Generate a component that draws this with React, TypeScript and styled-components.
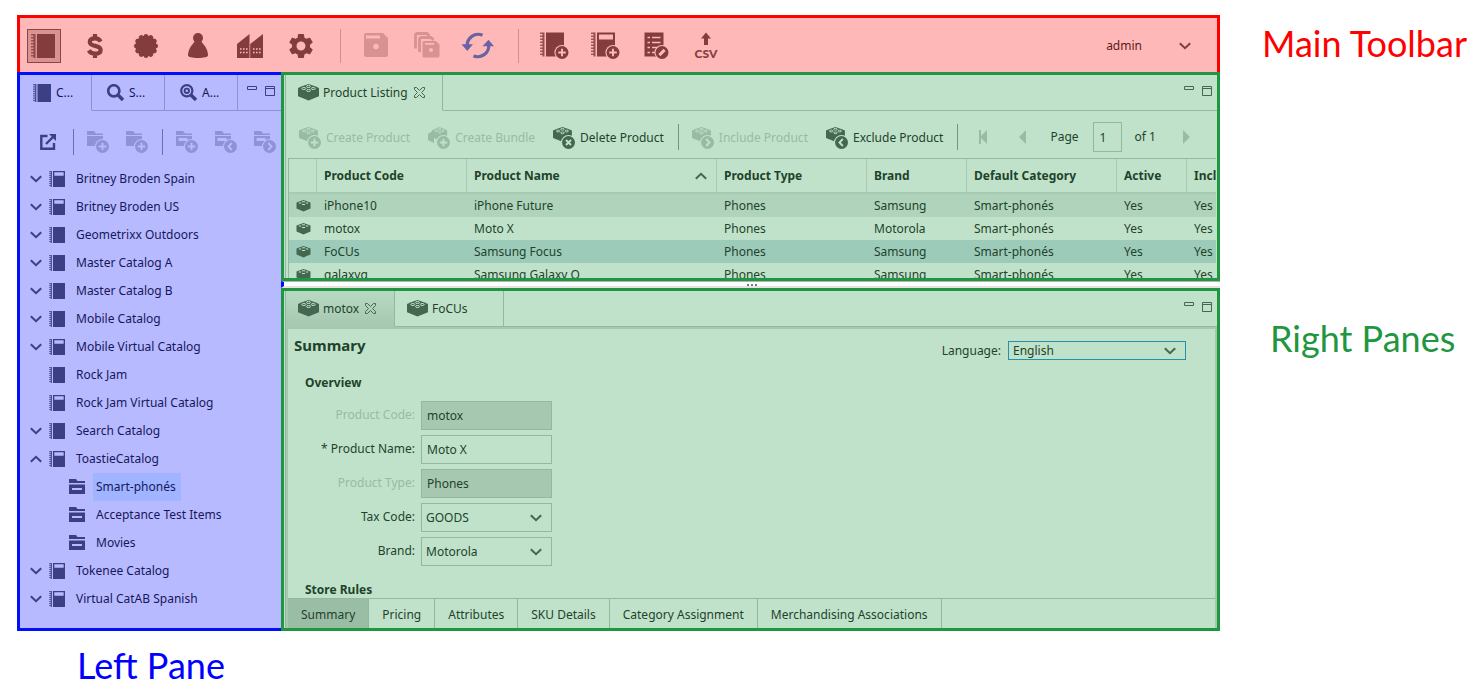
import React from "react";
import styled, { createGlobalStyle, css } from "styled-components";
import { MdSettings } from "react-icons/md";

const GlobalStyle = createGlobalStyle`
  *, *::before, *::after { box-sizing: border-box; }
  body { margin: 0; background: #fff; }
  button, input, select { font: inherit; color: inherit; margin: 0; padding: 0; border: 0; border-radius: 0; background: none; }
  svg { display: block; flex: none; }
`;

const red = { line: "#ff0000", surface: "#ffb8b8", icon: "#843c3c", faint: "#d99292", text: "#5c1a1a" };
const blue = { line: "#0010ff", surface: "#b8baff", icon: "#3c3f84", faint: "#9092d8", rule: "#8f91d6", text: "#15175c" };
const green = {
  line: "#1f9640", surface: "#c0e2ca", icon: "#436750", faint: "#98bba3", rule: "#94b79f",
  soft: "#a7cab2", shade: "#a6c8b1", text: "#1f422b",
};

/* ---------- page ---------- */

const Page = styled.div`
  display: grid;
  grid-template-columns: minmax(0, 1fr) 264px;
  padding: 15px 0 8px 17px;
  font: 12px/16px "Noto Sans", "Open Sans", sans-serif;
`;

const Body = styled.div`
  display: grid;
  grid-template-columns: 264px minmax(0, 1fr);
`;

const Note = styled.p<{ $color: string }>`
  margin: 0;
  font: 36px/44px Lato, "Open Sans", sans-serif;
  color: ${(p) => p.$color};
`;

const Notes = styled.aside`
  padding: 6px 0 0 42px;
  white-space: nowrap;
  ${Note} + ${Note} { margin: 251px 0 0 8px; }
`;

const Caption = styled.div`
  padding: 12px 0 0 60px;
`;

/* ---------- main toolbar ---------- */

const MainToolbar = styled.header`
  display: flex;
  align-items: center;
  gap: 17px;
  height: 57px;
  padding: 2px 26px 0 7px;
  border: 3px solid ${red.line};
  border-bottom: 0;
  background: ${red.surface};
  color: ${red.icon};
`;

const ToolButton = styled.button<{ $active?: boolean; $color?: string }>`
  display: grid;
  place-items: center;
  width: 34px;
  height: 34px;
  color: ${(p) => p.$color ?? "inherit"};
  ${(p) => p.$active && css`
    background: #d99393;
    box-shadow: inset 0 0 0 1px #8c4444;
  `}
`;

const ToolRule = styled.span`
  width: 1px;
  height: 34px;
  margin-left: 7px;
  background: #d48c8c;
`;

const UserMenu = styled.button`
  display: flex;
  align-items: center;
  gap: 37px;
  margin-left: auto;
  padding-bottom: 1px;
  color: ${red.text};
  svg { color: ${red.icon}; }
`;

/* ---------- left pane ---------- */

const LeftPane = styled.nav`
  display: flex;
  flex-direction: column;
  border: 3px solid ${blue.line};
  border-right: 0;
  background: ${blue.surface};
  color: ${blue.text};
  overflow: hidden;
`;

const TabBar = styled.div`
  display: flex;
  height: 36px;
`;

const LeftTab = styled.button<{ $active?: boolean }>`
  display: flex;
  align-items: center;
  gap: 5px;
  width: ${(p) => (p.$active ? 72 : 73)}px;
  padding-left: ${(p) => (p.$active ? 13 : 15)}px;
  border-right: 1px solid ${blue.rule};
  border-bottom: 1px solid ${(p) => (p.$active ? "transparent" : blue.rule)};
  svg { color: ${blue.icon}; }
`;

const WindowButtons = styled.div<{ $rule: string; $right: number }>`
  display: flex;
  flex: 1;
  justify-content: flex-end;
  gap: 8px;
  padding: 11px ${(p) => p.$right}px 0 0;
  border-bottom: 1px solid ${(p) => p.$rule};
  button { height: 10px; }
`;

const TreeTools = styled.div`
  display: flex;
  align-items: center;
  gap: 17px;
  height: 54px;
  padding: 8px 0 0 20px;
  color: ${blue.faint};
`;

const IconButton = styled.button<{ $color?: string }>`
  flex: none;
  color: ${(p) => p.$color ?? "inherit"};
`;

const Rule = styled.span<{ $color: string }>`
  flex: none;
  width: 1px;
  height: 26px;
  background: ${(p) => p.$color};
`;

const TreeRule = styled(Rule)<{ $wide?: boolean }>`
  margin: 0 -4px 0 ${(p) => (p.$wide ? 0 : -3)}px;
`;

const Tree = styled.ul`
  list-style: none;
  margin: 0;
  padding: 0 0 15px;
`;

const TreeRow = styled.li<{ $depth: number }>`
  display: flex;
  align-items: center;
  height: 28px;
  padding-left: ${(p) => 10 + p.$depth * 20}px;
  color: ${blue.icon};
`;

const Twist = styled.span`
  width: 19px;
`;

const TreeLabel = styled.a<{ $selected?: boolean }>`
  margin-left: 8px;
  padding: 0 5px 0 3px;
  line-height: 28px;
  color: ${blue.text};
  text-decoration: none;
  background: ${(p) => (p.$selected ? "#a0b4ff" : "transparent")};
`;

/* ---------- right panes ---------- */

const RightColumn = styled.main`
  display: flex;
  flex-direction: column;
  min-width: 0;
  color: ${green.text};
`;

const Pane = styled.section`
  border: 3px solid ${green.line};
  background: ${green.surface};
  padding-left: 1px;
`;

const Splitter = styled.div`
  display: grid;
  place-items: end center;
  height: 7px;
  border-left: 3px solid ${blue.line};
  border-bottom: 2px solid #e4e4e6;
  border-top: 1px solid #b4b4b8;
  span { width: 10px; height: 2px; border: dotted #777; border-width: 0 0 2px; }
`;

const PaneInner = styled.div`
  border-left: 1px solid ${green.rule};
`;

const PaneTab = styled.div<{ $wide?: boolean; $state: "open" | "shaded" | "back" }>`
  display: flex;
  align-items: center;
  gap: 4px;
  width: ${(p) => (p.$wide ? 157 : 109)}px;
  padding-left: 12px;
  border-right: 1px solid ${green.rule};
  border-bottom: 1px solid transparent;
  svg { color: ${green.icon}; }
  button + button { margin-left: 2px; }
  ${(p) => p.$state === "shaded" && css`
    background: linear-gradient(#b8dac3, ${green.shade});
    border-bottom-color: ${green.shade};
  `}
  ${(p) => p.$state === "back" && css`border-bottom-color: ${green.rule};`}
`;

const TabName = styled.button`
  display: flex;
  align-items: center;
  gap: 4px;
`;

const ListTools = styled.div`
  display: flex;
  align-items: center;
  height: 47px;
  padding: 5px 0 0 13px;
  gap: 18px;
  white-space: nowrap;
  overflow: hidden;
`;

const ActionButton = styled.button`
  display: flex;
  align-items: center;
  gap: 5px;
  line-height: 18px;
  padding-top: 1px;
  svg { color: ${green.icon}; }
  &:disabled { color: ${green.faint}; }
  &:disabled svg { color: ${green.faint}; }
`;

const ListRule = styled(Rule)`
  margin: 0 -5px 0 -4px;
`;

const Pager = styled.div`
  display: flex;
  align-items: center;
  padding-left: 8px;
  color: ${green.faint};
  label { margin: 0 14px 0 24px; color: ${green.text}; }
  span { margin: 0 27px 0 13px; color: ${green.text}; }
  button + button { margin-left: 31px; }
`;

const PageInput = styled.input`
  width: 29px;
  height: 30px;
  padding-left: 6px;
  border: 1px solid ${green.rule};
  color: ${green.text};
`;

const Grid = styled.div`
  height: 120px;
  margin: 0 1px 0 2px;
  overflow: hidden;
  border: solid ${green.rule};
  border-width: 1px 0 0 1px;
`;

const Table = styled.table`
  width: 100%;
  min-width: 980px;
  table-layout: fixed;
  border-collapse: separate;
  border-spacing: 0;
  white-space: nowrap;
  th, td { padding: 0 0 0 7px; text-align: left; }
  th {
    height: 35px;
    border-right: 1px solid ${green.soft};
    border-bottom: 2px solid ${green.soft};
  }
  th:last-child { border-right: 0; }
  td { height: 23px; }
  td svg { color: ${green.icon}; }
`;

const HeadCell = styled.span`
  display: flex;
  align-items: center;
  justify-content: space-between;
  padding-right: 9px;
  svg { color: ${green.icon}; }
`;

const DataRow = styled.tr<{ $tone: "odd" | "even" | "selected" }>`
  background: ${(p) => ({ odd: "#b0d3bb", even: green.surface, selected: "#9dcbba" })[p.$tone]};
`;

const Editor = styled.div`
  border: 2px solid ${green.shade};
  border-bottom: 0;
`;

const Form = styled.form`
  height: 269px;
  overflow: hidden;
  padding: 0 29px 0 17px;
`;

const FormHead = styled.div`
  display: flex;
  justify-content: space-between;
  align-items: flex-start;
  padding-top: 5px;
  margin-left: -11px;
`;

const Title = styled.h1`
  margin: 0;
  font: bold 15px/22px "Noto Sans", "Open Sans", sans-serif;
`;

const Language = styled.div`
  display: flex;
  align-items: center;
  gap: 7px;
  padding-top: 7px;
`;

const SelectBox = styled.div<{ $language?: boolean }>`
  display: grid;
  align-items: center;
  width: ${(p) => (p.$language ? 178 : 131)}px;
  height: ${(p) => (p.$language ? 19 : 29)}px;
  border: 1px solid ${(p) => (p.$language ? "#2391ab" : green.rule)};
  > * { grid-area: 1 / 1; }
  svg { justify-self: end; margin-right: 9px; color: ${green.icon}; pointer-events: none; }
`;

const Select = styled.select`
  appearance: none;
  width: 100%;
  height: 100%;
  padding-left: 4px;
`;

const Overview = styled.div`
  padding-top: 15px;
`;

const SectionTitle = styled.h2`
  margin: 0;
  font: bold 12px/16px "Noto Sans", "Open Sans", sans-serif;
`;

const Fields = styled.div`
  display: grid;
  grid-template-columns: 110px 131px;
  column-gap: 6px;
  row-gap: 5px;
  align-items: center;
  padding: 10px 0 16px;
`;

const FieldLabel = styled.label<{ $muted?: boolean }>`
  text-align: right;
  padding-bottom: 2px;
  color: ${(p) => (p.$muted ? green.faint : green.text)};
`;

const TextInput = styled.input`
  width: 131px;
  height: 29px;
  padding-left: 5px;
  border: 1px solid ${green.rule};
  &:read-only { background: ${green.shade}; }
`;

const BottomTabs = styled.div`
  display: flex;
  height: 30px;
  border-top: 1px solid ${green.rule};
`;

const BottomTab = styled.button<{ $active?: boolean }>`
  padding: 2px 13px 0;
  border-right: 1px solid ${green.rule};
  background: ${(p) => (p.$active ? "#9abda6" : "transparent")};
`;

/* ---------- icons ---------- */

const Chevron = ({ up }: { up?: boolean }) => (
  <svg width="12" height="8" viewBox="0 0 12 8" fill="none" stroke="currentColor" strokeWidth="2">
    <path d={up ? "M.8 6.800 6 1.800l5.200 5" : "M.8 1.200 6 6.200l5.200-5"} />
  </svg>
);

const NotebookArt = ({ label }: { label?: boolean }) => (
  <>
    <path d="M0 .8h3M0 3.800h3M0 6.800h3M0 9.800h3M0 12.800h3M0 15.800h3M0 18.800h3M0 21.800h3" stroke="currentColor" strokeWidth="1.400" opacity=".75" />
    <path d="M2.500 0h2v24h-2z" fill="currentColor" opacity=".85" />
    <path d={label ? "M6 0h18v24H6zM8 2v5h14V2z" : "M6 0h18v24H6z"} fill="currentColor" fillRule="evenodd" />
  </>
);

const Notebook = ({ size, label }: { size: number; label?: boolean }) => (
  <svg width={size} height={size} viewBox="0 0 24 24"><NotebookArt label={label} /></svg>
);

type BadgeKind = "plus" | "cross" | "left" | "right" | "pencil";

const badgePaths: Record<BadgeKind, string> = {
  plus: "M0-3.800v7.600M-3.800 0h7.600",
  cross: "M-2.500-2.500l5 5M2.500-2.500l-5 5",
  left: "M1.300-3.500-2 0l3.300 3.500",
  right: "M-1.300-3.500 2 0l-3.300 3.500",
  pencil: "M-2.600 2.600 2.600-2.600",
};

const Badge = ({ x, y, kind, surface }: { x: number; y: number; kind: BadgeKind; surface: string }) => (
  <g transform={`translate(${x} ${y})`}>
    <circle r="7.600" fill={surface} />
    <circle r="6.500" fill="currentColor" />
    <path d={badgePaths[kind]} fill="none" stroke={surface} strokeWidth={kind === "pencil" ? 3 : 1.900} />
  </g>
);

const Box = ({ children, shift = 0 }: { children: React.ReactNode; shift?: number }) => (
  <svg width="34" height="34" viewBox={`${-shift} 0 34 34`} fill="currentColor">{children}</svg>
);

const CatalogIcon = () => <Box><g transform="translate(4 5)"><NotebookArt /></g></Box>;

const DollarIcon = () => (
  <Box>
    <path
      d="M17 5v5M17 24v5M22.600 12.600c-1-2-2.800-3.200-5.600-3.200-3.200 0-5.200 1.400-5.200 3.600 0 2.500 2.300 3.200 5.400 3.900s5.400 1.700 5.400 4.100c0 2.400-2.300 3.700-5.400 3.700-3 0-5.200-1.200-6.400-3.300"
      fill="none" stroke="currentColor" strokeWidth="4.200"
    />
  </Box>
);

const SealIcon = () => (
  <Box>
    <circle cx="17" cy="17" r="10.600" />
    {Array.from({ length: 12 }, (_, i) => (
      <circle key={i} cx="17" cy="7.200" r="2.300" transform={`rotate(${i * 30} 17 17)`} />
    ))}
  </Box>
);

const PersonIcon = () => (
  <Box>
    <circle cx="18" cy="9" r="5" />
    <path d="M14.500 12.500h7c.6 1.400 3 3.500 4.700 6.800 1.300 2.500 1.800 5.200 1.800 7 0 1.800-4.300 2.700-10 2.700S8 28.100 8 26.300c0-1.800.5-4.500 1.800-7 1.700-3.300 4.100-5.400 4.700-6.800z" />
  </Box>
);

const FactoryIcon = () => (
  <Box>
    <path d="M6 15 18.500 5v24H6zM19.200 15 32 5v24H19.200z" />
    <path d="M9 20h8M9 23.500h8M22 20h8M22 23.500h8" stroke={red.surface} strokeWidth="1.300" strokeDasharray="1.600 1.400" />
  </Box>
);

const GearIcon = () => <Box><MdSettings x={4} y={2} size={30} /></Box>;

const SaveIcon = () => (
  <Box shift={1}>
    <path fillRule="evenodd" d="M7 4h17l5 5v17a2 2 0 0 1-2 2H7a2 2 0 0 1-2-2V6a2 2 0 0 1 2-2zM7 6.500v3h14v-3zM17 14.800a2.700 2.700 0 1 0 0 5.400 2.700 2.700 0 0 0 0-5.400z" />
  </Box>
);

const SaveAllIcon = () => (
  <Box shift={1}>
    <path d="M5.500 19.500v-13a2 2 0 0 1 2-2H17l2.500 2.500M9.500 23v-12.500a2 2 0 0 1 2-2H21l2.500 2.500" fill="none" stroke="currentColor" strokeWidth="2.800" />
    <path fillRule="evenodd" d="M14 12h12l3.500 3.500V27a1.500 1.500 0 0 1-1.500 1.500H14A1.500 1.500 0 0 1 12.500 27V13.500A1.500 1.500 0 0 1 14 12zM15 14v1.800h9V14zM21 19a2 2 0 1 0 0 4 2 2 0 0 0 0-4z" />
  </Box>
);

const RefreshIcon = () => (
  <Box shift={1}>
    <path d="M21.500 6.300A10.800 10.800 0 0 0 6.300 17M12.500 26.700A10.800 10.800 0 0 0 27.700 16" fill="none" stroke="currentColor" strokeWidth="3.200" />
    <path d="M.5 15.300h11.500L6.300 22zM21.500 17.300H33L27.500 10.800z" />
  </Box>
);

const NewCatalogIcon = ({ label }: { label?: boolean }) => (
  <Box shift={1}>
    <g transform="translate(3 3.500)"><NotebookArt label={label} /></g>
    <Badge x={25} y={23.500} kind="plus" surface={red.surface} />
  </Box>
);

const ListEditIcon = () => (
  <Box shift={1}>
    <path d="M5.500 3.500h19v24h-19z" />
    <path d="M8.500 8.500H11M8.500 13.500H11M8.500 18.500H11M8.500 23.500H11M13 8.500h8.500M13 13.500h8.500M13 18.500h8.500M13 23.500h6" stroke={red.surface} strokeWidth="1.700" />
    <Badge x={23} y={23.500} kind="pencil" surface={red.surface} />
  </Box>
);

const CsvIcon = () => (
  <Box>
    <path d="M17 3.500 22 9.500h-3V16h-4V9.500h-3z" />
    <text x="17" y="29" textAnchor="middle" fontFamily="Lato, sans-serif" fontWeight="900" fontSize="12">CSV</text>
  </Box>
);

const FolderToolIcon = ({ kind, labelled }: { kind: BadgeKind; labelled?: boolean }) => (
  <svg width="22" height="22" viewBox="0 0 22 22" fill="currentColor">
    <path d="M0 0h7l2 2.500h7V4H0z" />
    <path d={labelled ? "M0 5h16v10H0zM2.500 7v3h9V7z" : "M0 5h16v10H0z"} fillRule="evenodd" />
    <Badge x={15.500} y={15.500} kind={kind} surface={blue.surface} />
  </svg>
);

const OpenIcon = () => (
  <svg width="16" height="16" viewBox="0 0 16 16" fill="none" stroke="currentColor" strokeWidth="2.400">
    <path d="M7.500 2H1.300v12.700H14V9M6 10l7.500-7.500" />
    <path d="M9 0H16V7z" fill="currentColor" stroke="none" />
  </svg>
);

const SearchIcon = ({ target }: { target?: boolean }) => (
  <svg width="17" height="17" viewBox="0 0 17 17" fill="none" stroke="currentColor">
    <circle cx="6.800" cy="6.800" r="5.600" strokeWidth={target ? 2.200 : 2.600} />
    <path d="m11 11 5 5" strokeWidth="3.400" />
    {target && <circle cx="6.800" cy="6.800" r="2.200" strokeWidth="1.900" />}
  </svg>
);

const CategoryIcon = () => (
  <svg width="16" height="16" viewBox="0 0 16 16" fill="currentColor">
    <path d="M0 0h7l1.500 2H16v2H0z" />
    <path d="M0 5.500h16V15H0zM3 9v2h10V9z" fillRule="evenodd" />
  </svg>
);

const BrickArt = ({ surface }: { surface: string }) => (
  <>
    <path d="M0 4 4 2.300 10.500 0 17 2.300 21 4v8.300L10.500 16.500 0 12.300z" fill="currentColor" />
    <g fill="none" stroke={surface} strokeWidth="1">
      <ellipse cx="10.500" cy="2.500" rx="2" ry="1" />
      <ellipse cx="5.800" cy="4.500" rx="2" ry="1" />
      <ellipse cx="15.200" cy="4.500" rx="2" ry="1" />
      <ellipse cx="10.500" cy="6.500" rx="2" ry="1" />
    </g>
  </>
);

const Brick = () => (
  <svg width="21" height="17" viewBox="0 0 21 17"><BrickArt surface={green.surface} /></svg>
);

const RowBrick = () => (
  <svg width="15" height="13" viewBox="0 0 15 13">
    <path d="M.5 3.500 7.500 1l7 2.500v6L7.500 12.500l-7-3z" fill="currentColor" />
    <path d="M6 2.800h3M2.800 4h2.500M9.700 4h2.500M6 5.500h3" stroke={green.surface} strokeWidth="1" />
  </svg>
);

const BrickTool = ({ kind, bundle }: { kind: BadgeKind; bundle?: boolean }) => (
  <svg width="22" height="22" viewBox="0 0 22 22">
    {bundle && <path d="M0 7l6-4v13l-6-3z" fill="currentColor" />}
    <g transform={bundle ? "translate(4 0) scale(.72 .82)" : "scale(.9)"}><BrickArt surface={green.surface} /></g>
    <Badge x={15.500} y={15.500} kind={kind} surface={green.surface} />
  </svg>
);

const CloseIcon = () => (
  <svg width="11" height="11" viewBox="0 0 11 11" fill="none" stroke="currentColor">
    <path d="M.5.5h2l3 3 3-3h2v2l-3 3 3 3v2h-2l-3-3-3 3h-2v-2l3-3-3-3z" />
  </svg>
);

const WindowControls = ({ color, rule, right }: { color: string; rule: string; right: number }) => (
  <WindowButtons $rule={rule} $right={right}>
    <IconButton $color={color} aria-label="Minimize">
      <svg width="10" height="10" viewBox="0 0 10 10" fill="none" stroke="currentColor"><path d="M.5.5h9v3h-9z" /></svg>
    </IconButton>
    <IconButton $color={color} aria-label="Maximize">
      <svg width="10" height="10" viewBox="0 0 10 10" fill="none" stroke="currentColor"><path d="M.5.5h9v9h-9zM.5 2.500h9" /></svg>
    </IconButton>
  </WindowButtons>
);

const PageArrow = ({ dir, first }: { dir: "left" | "right"; first?: boolean }) => (
  <svg width="8" height="14" viewBox="0 0 8 14" fill="currentColor">
    <path d={dir === "left" ? "M8 0v14L1 7z" : "M0 0v14l7-7z"} />
    {first && <path d="M0 0h2v14H0z" />}
  </svg>
);

/* ---------- data ---------- */

type Node = { name: string; icon: "real" | "virtual" | "category"; state?: "closed" | "open"; selected?: boolean };

const tree: Node[] = [
  { name: "Britney Broden Spain", icon: "virtual", state: "closed" },
  { name: "Britney Broden US", icon: "virtual", state: "closed" },
  { name: "Geometrixx Outdoors", icon: "real", state: "closed" },
  { name: "Master Catalog A", icon: "real", state: "closed" },
  { name: "Master Catalog B", icon: "real", state: "closed" },
  { name: "Mobile Catalog", icon: "real", state: "closed" },
  { name: "Mobile Virtual Catalog", icon: "virtual", state: "closed" },
  { name: "Rock Jam", icon: "real" },
  { name: "Rock Jam Virtual Catalog", icon: "virtual" },
  { name: "Search Catalog", icon: "real", state: "closed" },
  { name: "ToastieCatalog", icon: "virtual", state: "open" },
  { name: "Smart-phonés", icon: "category", selected: true },
  { name: "Acceptance Test Items", icon: "category" },
  { name: "Movies", icon: "category" },
  { name: "Tokenee Catalog", icon: "virtual", state: "closed" },
  { name: "Virtual CatAB Spanish", icon: "virtual", state: "closed" },
];

const products = [
  ["iPhone10", "iPhone Future", "Phones", "Samsung", "Smart-phonés", "Yes", "Yes"],
  ["motox", "Moto X", "Phones", "Motorola", "Smart-phonés", "Yes", "Yes"],
  ["FoCUs", "Samsung Focus", "Phones", "Samsung", "Smart-phonés", "Yes", "Yes"],
  ["galaxyq", "Samsung Galaxy Q", "Phones", "Samsung", "Smart-phonés", "Yes", "Yes"],
];
const tones = ["odd", "even", "selected", "even"] as const;
const columns = ["Product Code", "Product Name", "Product Type", "Brand", "Default Category", "Active", "Included"];
const columnWidths = [28, 150, 250, 150, 100, 150, 70];
const editorTabs = ["Summary", "Pricing", "Attributes", "SKU Details", "Category Assignment", "Merchandising Associations"];

/* ---------- views ---------- */

const Toolbar = () => (
  <MainToolbar>
    <ToolButton $active aria-label="Catalog"><CatalogIcon /></ToolButton>
    <ToolButton aria-label="Price lists"><DollarIcon /></ToolButton>
    <ToolButton aria-label="Promotions"><SealIcon /></ToolButton>
    <ToolButton aria-label="Customers"><PersonIcon /></ToolButton>
    <ToolButton aria-label="Warehouse"><FactoryIcon /></ToolButton>
    <ToolButton aria-label="Configuration"><GearIcon /></ToolButton>
    <ToolRule />
    <ToolButton $color={red.faint} aria-label="Save"><SaveIcon /></ToolButton>
    <ToolButton $color={red.faint} aria-label="Save all"><SaveAllIcon /></ToolButton>
    <ToolButton $color="#6b62a3" aria-label="Refresh"><RefreshIcon /></ToolButton>
    <ToolRule />
    <ToolButton aria-label="Create catalog"><NewCatalogIcon /></ToolButton>
    <ToolButton aria-label="Create virtual catalog"><NewCatalogIcon label /></ToolButton>
    <ToolButton aria-label="Edit attributes"><ListEditIcon /></ToolButton>
    <ToolButton aria-label="Import CSV"><CsvIcon /></ToolButton>
    <UserMenu>admin<Chevron /></UserMenu>
  </MainToolbar>
);

const CatalogBrowser = () => (
  <LeftPane>
    <TabBar>
      <LeftTab $active><Notebook size={18} />C...</LeftTab>
      <LeftTab><SearchIcon />S...</LeftTab>
      <LeftTab><SearchIcon target />A...</LeftTab>
      <WindowControls color={blue.icon} rule={blue.rule} right={6} />
    </TabBar>
    <TreeTools>
      <IconButton $color={blue.icon} aria-label="Open"><OpenIcon /></IconButton>
      <TreeRule $wide $color="#6b6eb5" />
      <IconButton aria-label="Create category"><FolderToolIcon kind="plus" /></IconButton>
      <IconButton aria-label="Create subcategory"><FolderToolIcon kind="plus" /></IconButton>
      <TreeRule $color="#6b6eb5" />
      <IconButton aria-label="Link category"><FolderToolIcon kind="plus" labelled /></IconButton>
      <IconButton aria-label="Exclude category"><FolderToolIcon kind="left" labelled /></IconButton>
      <IconButton aria-label="Include category"><FolderToolIcon kind="right" labelled /></IconButton>
    </TreeTools>
    <Tree>
      {tree.map((n) => (
        <TreeRow key={n.name} $depth={n.icon === "category" ? 1 : 0}>
          <Twist>{n.state && <Chevron up={n.state === "open"} />}</Twist>
          {n.icon === "category" ? <CategoryIcon /> : <Notebook size={16} label={n.icon === "virtual"} />}
          <TreeLabel href="#" $selected={n.selected}>{n.name}</TreeLabel>
        </TreeRow>
      ))}
    </Tree>
  </LeftPane>
);

const ProductListing = () => (
  <Pane>
    <PaneInner>
      <TabBar>
        <PaneTab $wide $state="open">
          <TabName><Brick />Product Listing</TabName>
          <IconButton aria-label="Close Product Listing"><CloseIcon /></IconButton>
        </PaneTab>
        <WindowControls color={green.icon} rule={green.rule} right={5} />
      </TabBar>
      <ListTools>
        <ActionButton disabled><BrickTool kind="plus" />Create Product</ActionButton>
        <ActionButton disabled><BrickTool kind="plus" bundle />Create Bundle</ActionButton>
        <ActionButton><BrickTool kind="cross" />Delete Product</ActionButton>
        <ListRule $color="#6f957b" />
        <ActionButton disabled><BrickTool kind="right" />Include Product</ActionButton>
        <ActionButton><BrickTool kind="left" />Exclude Product</ActionButton>
        <ListRule $color="#6f957b" />
        <Pager>
          <IconButton aria-label="First page"><PageArrow dir="left" first /></IconButton>
          <IconButton aria-label="Previous page"><PageArrow dir="left" /></IconButton>
          <label htmlFor="page">Page</label>
          <PageInput id="page" defaultValue="1" />
          <span>of 1</span>
          <IconButton aria-label="Next page"><PageArrow dir="right" /></IconButton>
        </Pager>
      </ListTools>
      <Grid>
        <Table>
          <colgroup>
            {columnWidths.map((w, i) => <col key={i} width={w} />)}
            <col />
          </colgroup>
          <thead>
            <tr>
              <th aria-label="Type" />
              {columns.map((c) => (
                <th key={c}>
                  <HeadCell>{c}{c === "Product Name" && <Chevron up />}</HeadCell>
                </th>
              ))}
            </tr>
          </thead>
          <tbody>
            {products.map((row, i) => (
              <DataRow key={row[0]} $tone={tones[i]}>
                <td><RowBrick /></td>
                {row.map((cell, j) => <td key={j}>{cell}</td>)}
              </DataRow>
            ))}
          </tbody>
        </Table>
      </Grid>
    </PaneInner>
  </Pane>
);

const OverviewSection = () => (
  <Overview>
    <SectionTitle>Overview</SectionTitle>
    <Fields>
      <FieldLabel $muted htmlFor="code">Product Code:</FieldLabel>
      <TextInput id="code" readOnly defaultValue="motox" />
      <FieldLabel htmlFor="name">* Product Name:</FieldLabel>
      <TextInput id="name" defaultValue="Moto X" />
      <FieldLabel $muted htmlFor="type">Product Type:</FieldLabel>
      <TextInput id="type" readOnly defaultValue="Phones" />
      <FieldLabel htmlFor="tax">Tax Code:</FieldLabel>
      <SelectBox><Select id="tax"><option>GOODS</option></Select><Chevron /></SelectBox>
      <FieldLabel htmlFor="brand">Brand:</FieldLabel>
      <SelectBox><Select id="brand"><option>Motorola</option></Select><Chevron /></SelectBox>
    </Fields>
    <SectionTitle>Store Rules</SectionTitle>
  </Overview>
);

const ProductEditor = () => (
  <Pane>
    <PaneInner>
      <TabBar>
        <PaneTab $state="shaded">
          <TabName><Brick />motox</TabName>
          <IconButton aria-label="Close motox"><CloseIcon /></IconButton>
        </PaneTab>
        <PaneTab $state="back">
          <TabName><Brick />FoCUs</TabName>
        </PaneTab>
        <WindowControls color={green.icon} rule={green.rule} right={5} />
      </TabBar>
      <Editor>
        <Form>
          <FormHead>
            <Title>Summary</Title>
            <Language>
              <label htmlFor="language">Language:</label>
              <SelectBox $language>
                <Select id="language"><option>English</option></Select>
                <Chevron />
              </SelectBox>
            </Language>
          </FormHead>
          <OverviewSection />
        </Form>
        <BottomTabs>
          {editorTabs.map((t, i) => <BottomTab key={t} $active={i === 0}>{t}</BottomTab>)}
        </BottomTabs>
      </Editor>
    </PaneInner>
  </Pane>
);

export default function App() {
  return (
    <>
      <GlobalStyle />
      <Page>
        <div>
          <Toolbar />
          <Body>
            <CatalogBrowser />
            <RightColumn>
              <ProductListing />
              <Splitter><span /></Splitter>
              <ProductEditor />
            </RightColumn>
          </Body>
          <Caption><Note $color="#0000ff">Left Pane</Note></Caption>
        </div>
        <Notes>
          <Note $color="#ff0000">Main Toolbar</Note>
          <Note $color="#1f9640">Right Panes</Note>
        </Notes>
      </Page>
    </>
  );
}
